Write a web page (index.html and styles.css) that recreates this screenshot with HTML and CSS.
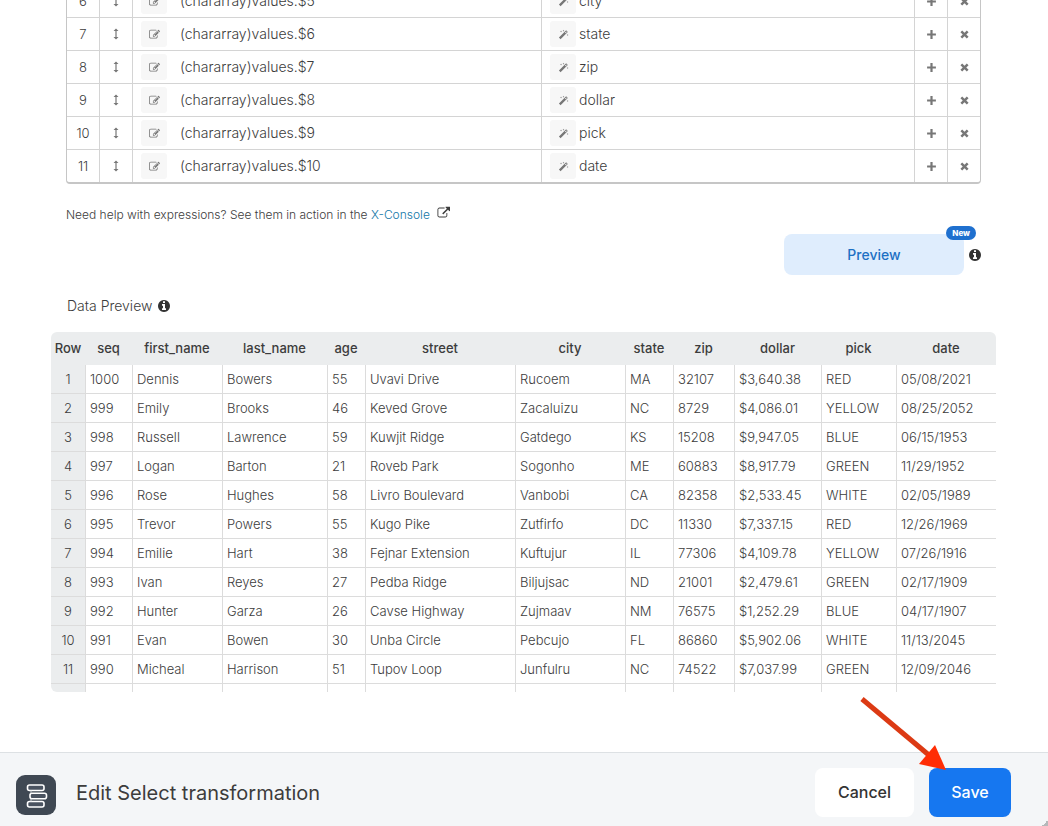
FILE: index.html
```html
<!DOCTYPE html>
<html lang="en">
<head>
<meta charset="utf-8">
<title>Edit Select transformation</title>
<link rel="stylesheet" href="styles.css">
</head>
<body>
<svg class="symbols" aria-hidden="true">
  <symbol id="i-move" viewBox="0 0 6 12"><path d="M3 0.500L5.500 3H3.600V9H5.500L3 11.500L0.500 9H2.400V3H0.500Z"/></symbol>
  <symbol id="i-edit" viewBox="0 0 1792 1792"><path d="M888 1184l116-116-152-152-116 116v56h96v96h56zm440-720q-16-16-33 1l-350 350q-17 17-1 33t33-1l350-350q17-17 1-33zm80 594v190q0 119-84.500 203.500t-203.500 84.500h-832q-119 0-203.500-84.500t-84.500-203.500v-832q0-119 84.500-203.500t203.500-84.500h832q63 0 117 25 15 7 18 23 3 17-9 29l-49 49q-14 14-32 8-23-6-45-6h-832q-66 0-113 47t-47 113v832q0 66 47 113t113 47h832q66 0 113-47t47-113v-126q0-13 9-22l64-64q15-15 35-7t20 29zm-96-738l288 288-672 672h-288v-288zm444 132l-92 92-288-288 92-92q28-28 68-28t68 28l152 152q28 28 28 68t-28 68z"/></symbol>
  <symbol id="i-wand" viewBox="0 0 12 12"><path d="M1 9.300L8.900 1.400L10.700 3.200L2.800 11.100ZM7.600 4L8.300 4.700L9.600 3.400L8.900 2.700Z" fill-rule="evenodd"/><path d="M3.300 1.700l.3.800.8.3-.8.3-.3.800-.3-.8-.8-.3.800-.3zM6 .9l.3.700.7.300-.7.300-.3.700-.3-.7-.7-.3.700-.3zM10.500 5.500l.3.700.7.300-.7.300-.3.700-.3-.7-.7-.3.700-.3z"/></symbol>
  <symbol id="i-plus" viewBox="0 0 10 10"><path d="M4 1h2v3h3v2H6v3H4V6H1V4h3z"/></symbol>
  <symbol id="i-close" viewBox="0 0 10 10"><path d="M2.900 1.300L5 3.400 7.100 1.300 8.700 2.900 6.600 5 8.700 7.100 7.100 8.700 5 6.600 2.900 8.700 1.300 7.100 3.400 5 1.300 2.900z"/></symbol>
  <symbol id="i-external" viewBox="0 0 1856 1792"><path d="M1472 989v320q0 119-84.500 203.500t-203.500 84.500h-832q-119 0-203.500-84.500t-84.500-203.500v-832q0-119 84.500-203.500t203.500-84.500h704q14 0 23 9t9 23v64q0 14-9 23t-23 9h-704q-66 0-113 47t-47 113v832q0 66 47 113t113 47h832q66 0 113-47t47-113v-320q0-14 9-23t23-9h64q14 0 23 9t9 23zm384-864v512q0 26-19 45t-45 19-45-19l-176-176-652 652q-10 10-23 10t-23-10l-114-114q-10-10-10-23t10-23l652-652-176-176q-19-19-19-45t19-45 45-19h512q26 0 45 19t19 45z"/></symbol>
  <symbol id="i-info" viewBox="128 128 1536 1536"><path d="M1152 1376v-160q0-14-9-23t-23-9h-96v-512q0-14-9-23t-23-9h-320q-14 0-23 9t-9 23v160q0 14 9 23t23 9h96v320h-96q-14 0-23 9t-9 23v160q0 14 9 23t23 9h448q14 0 23-9t9-23zm-128-896v-160q0-14-9-23t-23-9h-192q-14 0-23 9t-9 23v160q0 14 9 23t23 9h192q14 0 23-9t9-23zm640 416q0 209-103 385.500t-279.500 279.500-385.500 103-385.500-103-279.500-279.500-103-385.500 103-385.500 279.500-279.500 385.500-103 385.500 103 279.500 279.500 103 385.500z"/></symbol>
</svg>

<main class="content">
  <div class="fields-frame">
    <table class="fields">
      <colgroup><col class="w-small"><col class="w-small"><col class="w-expression"><col class="w-alias"><col class="w-small"><col class="w-last"></colgroup>
      <tbody>
        <tr><td>6</td><td><svg class="move"><use href="#i-move"/></svg></td>
          <td><div class="field"><button class="tool" aria-label="Edit expression"><svg class="icon"><use href="#i-edit"/></svg></button><input class="expression" aria-label="Expression 6" value="(chararray)values.$5"></div></td>
          <td><div class="field"><button class="tool" aria-label="Suggest alias"><svg class="icon"><use href="#i-wand"/></svg></button><input class="alias" aria-label="Alias 6" value="city"></div></td>
          <td><button class="row-action" aria-label="Add"><svg class="icon"><use href="#i-plus"/></svg></button></td><td><button class="row-action" aria-label="Remove"><svg class="icon"><use href="#i-close"/></svg></button></td></tr>
        <tr><td>7</td><td><svg class="move"><use href="#i-move"/></svg></td>
          <td><div class="field"><button class="tool" aria-label="Edit expression"><svg class="icon"><use href="#i-edit"/></svg></button><input class="expression" aria-label="Expression 7" value="(chararray)values.$6"></div></td>
          <td><div class="field"><button class="tool" aria-label="Suggest alias"><svg class="icon"><use href="#i-wand"/></svg></button><input class="alias" aria-label="Alias 7" value="state"></div></td>
          <td><button class="row-action" aria-label="Add"><svg class="icon"><use href="#i-plus"/></svg></button></td><td><button class="row-action" aria-label="Remove"><svg class="icon"><use href="#i-close"/></svg></button></td></tr>
        <tr><td>8</td><td><svg class="move"><use href="#i-move"/></svg></td>
          <td><div class="field"><button class="tool" aria-label="Edit expression"><svg class="icon"><use href="#i-edit"/></svg></button><input class="expression" aria-label="Expression 8" value="(chararray)values.$7"></div></td>
          <td><div class="field"><button class="tool" aria-label="Suggest alias"><svg class="icon"><use href="#i-wand"/></svg></button><input class="alias" aria-label="Alias 8" value="zip"></div></td>
          <td><button class="row-action" aria-label="Add"><svg class="icon"><use href="#i-plus"/></svg></button></td><td><button class="row-action" aria-label="Remove"><svg class="icon"><use href="#i-close"/></svg></button></td></tr>
        <tr><td>9</td><td><svg class="move"><use href="#i-move"/></svg></td>
          <td><div class="field"><button class="tool" aria-label="Edit expression"><svg class="icon"><use href="#i-edit"/></svg></button><input class="expression" aria-label="Expression 9" value="(chararray)values.$8"></div></td>
          <td><div class="field"><button class="tool" aria-label="Suggest alias"><svg class="icon"><use href="#i-wand"/></svg></button><input class="alias" aria-label="Alias 9" value="dollar"></div></td>
          <td><button class="row-action" aria-label="Add"><svg class="icon"><use href="#i-plus"/></svg></button></td><td><button class="row-action" aria-label="Remove"><svg class="icon"><use href="#i-close"/></svg></button></td></tr>
        <tr><td>10</td><td><svg class="move"><use href="#i-move"/></svg></td>
          <td><div class="field"><button class="tool" aria-label="Edit expression"><svg class="icon"><use href="#i-edit"/></svg></button><input class="expression" aria-label="Expression 10" value="(chararray)values.$9"></div></td>
          <td><div class="field"><button class="tool" aria-label="Suggest alias"><svg class="icon"><use href="#i-wand"/></svg></button><input class="alias" aria-label="Alias 10" value="pick"></div></td>
          <td><button class="row-action" aria-label="Add"><svg class="icon"><use href="#i-plus"/></svg></button></td><td><button class="row-action" aria-label="Remove"><svg class="icon"><use href="#i-close"/></svg></button></td></tr>
        <tr><td>11</td><td><svg class="move"><use href="#i-move"/></svg></td>
          <td><div class="field"><button class="tool" aria-label="Edit expression"><svg class="icon"><use href="#i-edit"/></svg></button><input class="expression" aria-label="Expression 11" value="(chararray)values.$10"></div></td>
          <td><div class="field"><button class="tool" aria-label="Suggest alias"><svg class="icon"><use href="#i-wand"/></svg></button><input class="alias" aria-label="Alias 11" value="date"></div></td>
          <td><button class="row-action" aria-label="Add"><svg class="icon"><use href="#i-plus"/></svg></button></td><td><button class="row-action" aria-label="Remove"><svg class="icon"><use href="#i-close"/></svg></button></td></tr>
      </tbody>
    </table>
  </div>

  <p class="help">Need help with expressions? See them in action in the <a href="#">X-Console</a><svg class="external"><use href="#i-external"/></svg></p>

  <div class="preview-bar">
    <div class="preview-wrap"><button class="preview">Preview</button><span class="badge">New</span></div>
    <svg class="info"><use href="#i-info"/></svg>
  </div>

  <h2 class="section-title">Data Preview <svg class="info"><use href="#i-info"/></svg></h2>

  <div class="data-frame">
    <table class="data">
      <colgroup><col class="c-row"><col class="c-seq"><col class="c-first"><col class="c-last"><col class="c-age"><col class="c-street"><col class="c-city"><col class="c-state"><col class="c-zip"><col class="c-dollar"><col class="c-pick"><col class="c-date"></colgroup>
      <thead><tr><th>Row</th><th>seq</th><th>first_name</th><th>last_name</th><th>age</th><th>street</th><th>city</th><th>state</th><th>zip</th><th>dollar</th><th>pick</th><th>date</th></tr></thead>
      <tbody>
        <tr><th>1</th><td>1000</td><td>Dennis</td><td>Bowers</td><td>55</td><td>Uvavi Drive</td><td>Rucoem</td><td>MA</td><td>32107</td><td>$3,640.38</td><td>RED</td><td>05/08/2021</td></tr>
        <tr><th>2</th><td>999</td><td>Emily</td><td>Brooks</td><td>46</td><td>Keved Grove</td><td>Zacaluizu</td><td>NC</td><td>8729</td><td>$4,086.01</td><td>YELLOW</td><td>08/25/2052</td></tr>
        <tr><th>3</th><td>998</td><td>Russell</td><td>Lawrence</td><td>59</td><td>Kuwjit Ridge</td><td>Gatdego</td><td>KS</td><td>15208</td><td>$9,947.05</td><td>BLUE</td><td>06/15/1953</td></tr>
        <tr><th>4</th><td>997</td><td>Logan</td><td>Barton</td><td>21</td><td>Roveb Park</td><td>Sogonho</td><td>ME</td><td>60883</td><td>$8,917.79</td><td>GREEN</td><td>11/29/1952</td></tr>
        <tr><th>5</th><td>996</td><td>Rose</td><td>Hughes</td><td>58</td><td>Livro Boulevard</td><td>Vanbobi</td><td>CA</td><td>82358</td><td>$2,533.45</td><td>WHITE</td><td>02/05/1989</td></tr>
        <tr><th>6</th><td>995</td><td>Trevor</td><td>Powers</td><td>55</td><td>Kugo Pike</td><td>Zutfirfo</td><td>DC</td><td>11330</td><td>$7,337.15</td><td>RED</td><td>12/26/1969</td></tr>
        <tr><th>7</th><td>994</td><td>Emilie</td><td>Hart</td><td>38</td><td>Fejnar Extension</td><td>Kuftujur</td><td>IL</td><td>77306</td><td>$4,109.78</td><td>YELLOW</td><td>07/26/1916</td></tr>
        <tr><th>8</th><td>993</td><td>Ivan</td><td>Reyes</td><td>27</td><td>Pedba Ridge</td><td>Biljujsac</td><td>ND</td><td>21001</td><td>$2,479.61</td><td>GREEN</td><td>02/17/1909</td></tr>
        <tr><th>9</th><td>992</td><td>Hunter</td><td>Garza</td><td>26</td><td>Cavse Highway</td><td>Zujmaav</td><td>NM</td><td>76575</td><td>$1,252.29</td><td>BLUE</td><td>04/17/1907</td></tr>
        <tr><th>10</th><td>991</td><td>Evan</td><td>Bowen</td><td>30</td><td>Unba Circle</td><td>Pebcujo</td><td>FL</td><td>86860</td><td>$5,902.06</td><td>WHITE</td><td>11/13/2045</td></tr>
        <tr><th>11</th><td>990</td><td>Micheal</td><td>Harrison</td><td>51</td><td>Tupov Loop</td><td>Junfulru</td><td>NC</td><td>74522</td><td>$7,037.99</td><td>GREEN</td><td>12/09/2046</td></tr>
        <tr class="tail"><th></th><td></td><td></td><td></td><td></td><td></td><td></td><td></td><td></td><td></td><td></td><td></td></tr>
      </tbody>
    </table>
  </div>
</main>

<footer class="footer">
  <svg class="logo" viewBox="0 0 40 40" aria-hidden="true">
    <rect width="40" height="40" rx="9" fill="#3f4853"/>
    <g fill="#4a5360" stroke="#fff" stroke-width="1.600">
      <rect x="11.500" y="10" width="16.500" height="5.500" rx="2"/>
      <rect x="14" y="18.200" width="16.500" height="5.500" rx="2"/>
      <rect x="11.500" y="26.500" width="16.500" height="5.500" rx="2"/>
    </g>
    <path d="M15 15.500v2.700M15 23.700v2.800" fill="none" stroke="#c8ccd0" stroke-width="1"/>
  </svg>
  <h1 class="title">Edit Select transformation</h1>
  <button class="button cancel">Cancel</button>
  <button class="button save">Save</button>
  <svg class="pointer" viewBox="0 0 88 74" aria-hidden="true">
    <path d="M2 2L70 59" stroke="#dc3a14" stroke-width="5"/>
    <path d="M86 73L59 67L75 48Z" fill="#ff2d05"/>
  </svg>
  <span class="grip"></span>
</footer>
</body>
</html>
```

FILE: styles.css
```css
* { box-sizing: border-box; }

body {
  display: flex;
  flex-direction: column;
  height: 100vh;
  margin: 0;
  overflow: hidden;
  background: #fff;
  color: #3c3c3c;
  font-family: Inter, "Liberation Sans", sans-serif;
  font-size: 13px;
  font-weight: 300;
}

button, input {
  margin: 0;
  padding: 0;
  border: 0;
  background: none;
  color: inherit;
  font: inherit;
}

svg { display: block; fill: currentColor; }
.symbols { position: absolute; width: 0; height: 0; }

.content {
  flex: 1;
  min-height: 0;
  display: flex;
  flex-direction: column;
  justify-content: flex-end;
  padding: 0 52px 60px 51px;
}
.content > * { flex-shrink: 0; }

table { width: 100%; border-collapse: separate; border-spacing: 0; table-layout: fixed; }

.fields-frame {
  margin: 0 15px;
  border: 1px solid #c6c6c6;
  border-bottom-width: 2px;
  border-radius: 4px;
}
.fields td {
  height: 33px;
  padding: 0 0 1px;
  border-right: 1px solid #d4d4d4;
  border-bottom: 1px solid #d4d4d4;
  text-align: center;
}
.fields td:last-child { border-right: 0; }
.fields tr:last-child td { height: 32px; border-bottom: 0; }
.w-small { width: 33px; }
.w-last { width: 32px; }
.w-alias { width: 373px; }

.move { width: 6px; height: 12px; margin: 0 auto; color: #777; }
.icon { width: 11px; height: 11px; margin-top: 2px; color: #777; }
.field { display: flex; align-items: center; padding-left: 8px; }
.tool {
  display: flex;
  align-items: center;
  justify-content: center;
  width: 26px;
  height: 26px;
  border-radius: 3px;
  background: #f7f7f7;
}
.expression, .alias { flex: 1; min-width: 0; height: 26px; font-size: 14px; }
.expression { margin-left: 13px; }
.alias { margin-left: 3px; }
.row-action { display: flex; align-items: center; justify-content: center; width: 100%; height: 28px; }

.help {
  display: flex;
  align-items: center;
  margin: 22px 15px 0;
  font-size: 12px;
  line-height: 18px;
  white-space: pre-wrap;
}
.help a { color: #1277a8; text-decoration: none; }
.external { width: 13px; height: 13px; margin: 0 0 5px 7px; }

.preview-bar {
  display: flex;
  align-items: center;
  justify-content: flex-end;
  gap: 5px;
  margin: 10px 15px 0;
}
.preview-wrap { position: relative; }
.preview {
  width: 180px;
  height: 41px;
  border-radius: 8px;
  background: #dfedfd;
  color: #1d70c4;
  font-size: 14px;
  font-weight: 500;
}
.badge {
  position: absolute;
  top: -8px;
  right: -12px;
  padding: 0 6px;
  border-radius: 7px;
  background: #1f70cf;
  color: #fff;
  font-size: 8px;
  font-weight: 800;
  line-height: 14px;
}
.info { width: 12px; height: 12px; color: #333; }

.section-title {
  display: flex;
  align-items: center;
  gap: 6px;
  margin: 21px 16px 16px;
  font-size: 14px;
  font-weight: 300;
  line-height: 20px;
}

.data-frame { overflow: hidden; border-radius: 6px; }
.data th, .data td { padding: 0 4px; white-space: nowrap; }
.data td {
  height: 29px;
  border-bottom: 1px solid #dcdcdc;
  border-left: 1px solid #dcdcdc;
  text-align: left;
}
.data tbody th { border-bottom: 1px solid #dcdcdc; background: #ebedee; font-weight: 300; }
.data thead th { height: 33px; padding: 0 0 1px; background: #ebedee; font-weight: 500; }
.data .tail th, .data .tail td { height: 8px; border-bottom: 0; }
.c-row { width: 34px; }
.c-seq { width: 47px; }
.c-first { width: 90px; }
.c-last { width: 105px; }
.c-age { width: 38px; }
.c-city { width: 110px; }
.c-state { width: 48px; }
.c-zip { width: 61px; }
.c-dollar { width: 87px; }
.c-pick { width: 75px; }
.c-date { width: 100px; }

.footer {
  position: relative;
  display: flex;
  align-items: center;
  padding: 15px 37px 9px 16px;
  border-top: 1px solid #dde1e4;
  background: #f4f6f8;
}
.logo { width: 40px; height: 40px; margin-top: 4px; }
.title { flex: 1; margin: 0 20px; font-size: 20px; font-weight: 400; line-height: 28px; }
.button { height: 49px; padding-bottom: 2px; border-radius: 8px; font-size: 16px; font-weight: 500; }
.cancel { width: 99px; margin-right: 15px; background: #fff; color: #333; }
.save { width: 82px; background: #1677f0; color: #fff; }
.pointer { position: absolute; top: -56px; right: 100px; width: 88px; height: 74px; }
.grip {
  position: absolute;
  right: 0;
  bottom: 0;
  width: 6px;
  height: 6px;
  background: linear-gradient(135deg, transparent 50%, #b5b8ba 50%);
}
```
